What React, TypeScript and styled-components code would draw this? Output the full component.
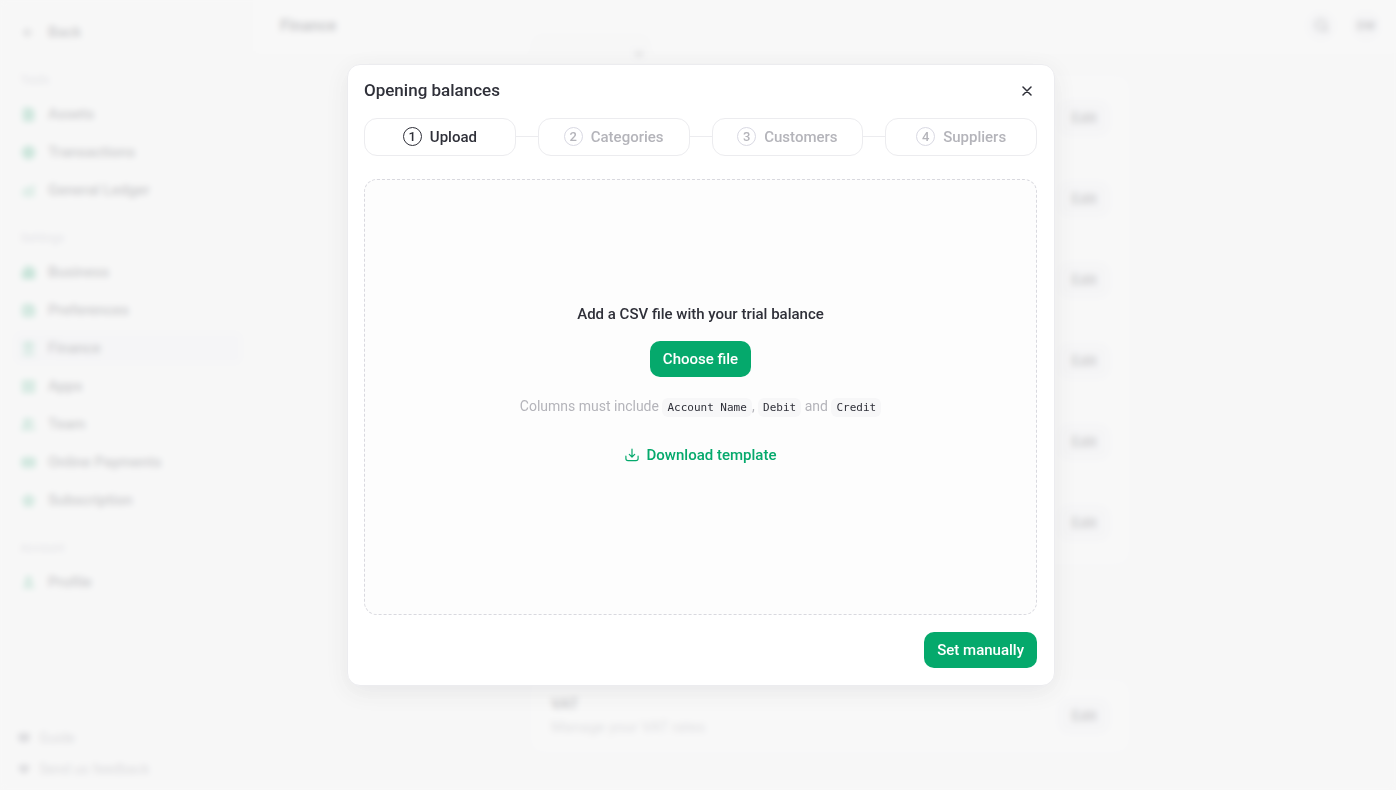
import React from "react";
import styled, { createGlobalStyle, css } from "styled-components";
import {
  ArrowLeft,
  Building2,
  ChartNoAxesCombined,
  ChevronDown,
  CircleDollarSign,
  CreditCard,
  FileText,
  Heart,
  Landmark,
  LayoutGrid,
  Search,
  Star,
  StickyNote,
  User,
  Users,
  BookOpen,
} from "lucide-react";

const color = {
  ink: "#2f3039",
  muted: "#b4b4ba",
  faint: "#a9a9b8",
  line: "#ececef",
  green: "#05a96c",
  navGreen: "#0b9560",
  canvas: "#f7f7f7",
};

const GlobalStyle = createGlobalStyle`
  *, *::before, *::after { box-sizing: border-box; }
  body {
    margin: 0;
    background: ${color.canvas};
    color: ${color.ink};
    font-family: Roboto, "Liberation Sans", sans-serif;
    font-size: 15px;
    line-height: 20px;
    -webkit-font-smoothing: antialiased;
  }
  button, a { font: inherit; color: inherit; text-decoration: none; }
  button { border: 0; cursor: pointer; }
  h1, h2, h3, p, ol, ul { margin: 0; padding: 0; list-style: none; }
`;

const Shell = styled.div`
  display: grid;
  grid-template-columns: 256px minmax(0, 1fr);
  grid-template-rows: minmax(0, 1fr);
  height: 100vh;
  overflow: hidden;
`;

const Sidebar = styled.aside`
  display: flex;
  flex-direction: column;
  padding: 15px 13px 6px;
`;

const NavList = styled.nav`
  display: flex;
  flex-direction: column;
  gap: 23px;
`;

const NavGroup = styled.div`
  display: flex;
  flex-direction: column;
  gap: 4px;
`;

const NavLabel = styled.h3`
  padding: 0 7px;
  margin-bottom: 5px;
  font-size: 12px;
  line-height: 16px;
  font-weight: 500;
  color: ${color.faint};
`;

const NavItem = styled.a<{ $active?: boolean; $plain?: boolean }>`
  display: flex;
  align-items: center;
  gap: 12px;
  height: 34px;
  padding: 0 8px;
  border-radius: 8px;
  font-weight: 500;
  ${(p) => p.$active && css`background: #eeeef4;`}
  svg {
    width: 15px;
    height: 15px;
    color: ${(p) => (p.$plain ? color.ink : color.navGreen)};
    fill: ${(p) => (p.$plain ? "none" : "rgba(11, 149, 96, 0.6)")};
  }
`;

const SideFooter = styled.div`
  display: flex;
  flex-direction: column;
  margin-top: auto;
`;

const FooterLink = styled.a`
  display: flex;
  align-items: center;
  gap: 9px;
  height: 31px;
  padding: 0 5px;
  font-size: 14px;
  color: #7c7c88;
  svg {
    width: 12px;
    height: 12px;
    color: #7c7c88;
    fill: #7c7c88;
  }
`;

const Main = styled.main`
  min-width: 0;
`;

const TopBar = styled.header`
  display: flex;
  align-items: center;
  justify-content: space-between;
  height: 51px;
  padding: 0 15px 0 24px;
  background: #fafafa;
`;

const PageTitle = styled.h1`
  font-size: 16px;
  font-weight: 700;
`;

const TopActions = styled.div`
  display: flex;
  gap: 15px;
`;

const RoundButton = styled.button`
  display: grid;
  place-items: center;
  width: 30px;
  height: 30px;
  padding: 0;
  border-radius: 50%;
  background: #eeeef3;
  font-size: 12px;
  font-weight: 600;
`;

const Content = styled.div`
  display: flex;
  flex-direction: column;
  width: 606px;
  max-width: 100%;
  margin: 0 auto;
  padding-left: 8px;
`;

const Picker = styled.button`
  display: flex;
  align-items: center;
  justify-content: flex-end;
  width: 120px;
  height: 40px;
  margin: -17px 0 2px;
  padding: 0 6px;
  border-radius: 10px;
  background: #f4f4f5;
  color: #55555f;
`;

const Card = styled.section`
  display: flex;
  flex-direction: column;
  padding: 0 18px 0 19px;
  margin-bottom: 116px;
  border: 1px solid #f1f1f4;
  border-radius: 12px;
  background: #fafafa;
`;

const SettingRow = styled.div<{ $compact?: boolean }>`
  display: flex;
  align-items: center;
  justify-content: space-between;
  height: ${(p) => (p.$compact ? "70px" : "81px")};
`;

const EditButton = styled.button`
  height: 36px;
  margin-left: auto;
  padding: 0 13px;
  border-radius: 10px;
  background: #eeeef3;
  font-weight: 500;
`;

const RowTitle = styled.h2`
  font-size: 15px;
  font-weight: 600;
  line-height: 23px;
`;

const RowText = styled.p`
  font-size: 15px;
  line-height: 23px;
  color: #8e8e99;
`;

const Overlay = styled.div`
  position: fixed;
  inset: 0;
  display: flex;
  align-items: center;
  justify-content: center;
  padding: 0 0 41px 6px;
  background: rgba(247, 247, 247, 0.77);
  backdrop-filter: blur(3px);
`;

const Dialog = styled.section`
  display: flex;
  flex-direction: column;
  width: 708px;
  max-width: 100%;
  padding: 16px 17px 17px 16px;
  border: 1px solid ${color.line};
  border-radius: 13px;
  background: #fff;
  box-shadow: 0 6px 24px rgba(20, 20, 30, 0.07);
`;

const DialogHeader = styled.header`
  display: flex;
  align-items: flex-start;
  justify-content: space-between;
  height: 37px;
`;

const DialogTitle = styled.h2`
  font-size: 17px;
  font-weight: 500;
  line-height: 18px;
`;

const CloseButton = styled.button`
  display: grid;
  place-items: center;
  width: 20px;
  height: 20px;
  padding: 0;
  background: transparent;
`;

const Steps = styled.ol`
  display: flex;
  align-items: center;
`;

const Step = styled.li<{ $current?: boolean }>`
  display: flex;
  flex: 1;
  align-items: center;
  justify-content: center;
  gap: 8px;
  height: 38px;
  border: 1px solid ${color.line};
  border-radius: 13px;
  font-weight: 500;
  color: ${(p) => (p.$current ? color.ink : color.muted)};
`;

const StepNumber = styled.span<{ $current?: boolean }>`
  display: grid;
  place-items: center;
  width: 19px;
  height: 19px;
  border: 1px solid ${(p) => (p.$current ? color.ink : "#d9d9e3")};
  border-radius: 50%;
  font-size: 13px;
  line-height: 16px;
`;

const Connector = styled.li`
  width: 22px;
  height: 1px;
  background: ${color.line};
`;

const DropZone = styled.div`
  display: flex;
  flex-direction: column;
  align-items: center;
  justify-content: center;
  min-height: 436px;
  margin: 23px 0 17px;
  padding-bottom: 24px;
  border: 1px dashed #d9d9df;
  border-radius: 13px;
  background: #fdfdfd;
`;

const Prompt = styled.p`
  margin-bottom: 17px;
  font-weight: 500;
`;

const PrimaryButton = styled.button`
  height: 36px;
  padding: 0 13px;
  border-radius: 10px;
  background: ${color.green};
  color: #fff;
  font-weight: 500;
`;

const Hint = styled.p`
  margin: 19px 0 27px;
  font-size: 14px;
  color: ${color.muted};
`;

const Code = styled.code`
  padding: 3px 5px;
  border-radius: 6px;
  background: #f7f7f8;
  color: ${color.ink};
  font-family: "DejaVu Sans Mono", monospace;
  font-size: 11px;
`;

const TemplateLink = styled.a`
  display: flex;
  align-items: center;
  gap: 8px;
  color: ${color.green};
  font-weight: 500;
`;

const DialogFooter = styled.footer`
  display: flex;
  justify-content: flex-end;
`;

const CloseIcon = () => (
  <svg width="10" height="10" viewBox="0 0 10 10" fill="none" stroke="currentColor" strokeWidth="1.5" strokeLinecap="round">
    <path d="M1 1l8 8M9 1L1 9" />
  </svg>
);

const DownloadIcon = () => (
  <svg width="14" height="14" viewBox="0 0 14 14" fill="none" stroke="currentColor" strokeWidth="1.2" strokeLinecap="round" strokeLinejoin="round">
    <path d="M7 1.2v7.6M4.3 6.3L7 9l2.7-2.7M.9 8.2v2.3c0 1.3.9 2.2 2.2 2.2h7.8c1.3 0 2.2-.9 2.2-2.2V8.2" />
  </svg>
);

const groups = [
  {
    label: "Tools",
    items: [
      { name: "Assets", Icon: FileText },
      { name: "Transactions", Icon: CircleDollarSign },
      { name: "General Ledger", Icon: ChartNoAxesCombined },
    ],
  },
  {
    label: "Settings",
    items: [
      { name: "Business", Icon: Building2 },
      { name: "Preferences", Icon: StickyNote },
      { name: "Finance", Icon: Landmark },
      { name: "Apps", Icon: LayoutGrid },
      { name: "Team", Icon: Users },
      { name: "Online Payments", Icon: CreditCard },
      { name: "Subscription", Icon: Star },
    ],
  },
  { label: "Account", items: [{ name: "Profile", Icon: User }] },
];

const steps = ["Upload", "Categories", "Customers", "Suppliers"];
const settings = [1, 2, 3, 4, 5, 6];

export default function App() {
  return (
    <>
      <GlobalStyle />
      <Shell>
        <Sidebar>
          <NavList>
            <NavItem href="#back" $plain>
              <ArrowLeft />
              Back
            </NavItem>
            {groups.map((group) => (
              <NavGroup key={group.label}>
                <NavLabel>{group.label}</NavLabel>
                {group.items.map(({ name, Icon }) => (
                  <NavItem key={name} href={`#${name}`} $active={name === "Finance"}>
                    <Icon />
                    {name}
                  </NavItem>
                ))}
              </NavGroup>
            ))}
          </NavList>
          <SideFooter>
            <FooterLink href="#guide">
              <BookOpen />
              Guide
            </FooterLink>
            <FooterLink href="#feedback">
              <Heart />
              Send us feedback
            </FooterLink>
          </SideFooter>
        </Sidebar>
        <Main>
          <TopBar>
            <PageTitle>Finance</PageTitle>
            <TopActions>
              <RoundButton aria-label="Search">
                <Search size={15} strokeWidth={3} />
              </RoundButton>
              <RoundButton>DW</RoundButton>
            </TopActions>
          </TopBar>
          <Content>
            <Picker aria-label="Period">
              <ChevronDown size={12} strokeWidth={4} />
            </Picker>
            <Card>
              {settings.map((id) => (
                <SettingRow key={id}>
                  <EditButton>Edit</EditButton>
                </SettingRow>
              ))}
            </Card>
            <Card>
              <SettingRow $compact>
                <div>
                  <RowTitle>VAT</RowTitle>
                  <RowText>Manage your VAT rates</RowText>
                </div>
                <EditButton>Edit</EditButton>
              </SettingRow>
            </Card>
          </Content>
        </Main>
      </Shell>
      <Overlay>
        <Dialog role="dialog" aria-modal="true" aria-labelledby="dialog-title">
          <DialogHeader>
            <DialogTitle id="dialog-title">Opening balances</DialogTitle>
            <CloseButton aria-label="Close">
              <CloseIcon />
            </CloseButton>
          </DialogHeader>
          <Steps>
            {steps.map((name, i) => (
              <React.Fragment key={name}>
                {i > 0 && <Connector aria-hidden="true" />}
                <Step $current={i === 0}>
                  <StepNumber $current={i === 0}>{i + 1}</StepNumber>
                  {name}
                </Step>
              </React.Fragment>
            ))}
          </Steps>
          <DropZone>
            <Prompt>Add a CSV file with your trial balance</Prompt>
            <PrimaryButton>Choose file</PrimaryButton>
            <Hint>
              Columns must include <Code>Account Name</Code>, <Code>Debit</Code> and <Code>Credit</Code>
            </Hint>
            <TemplateLink href="#template">
              <DownloadIcon />
              Download template
            </TemplateLink>
          </DropZone>
          <DialogFooter>
            <PrimaryButton>Set manually</PrimaryButton>
          </DialogFooter>
        </Dialog>
      </Overlay>
    </>
  );
}
